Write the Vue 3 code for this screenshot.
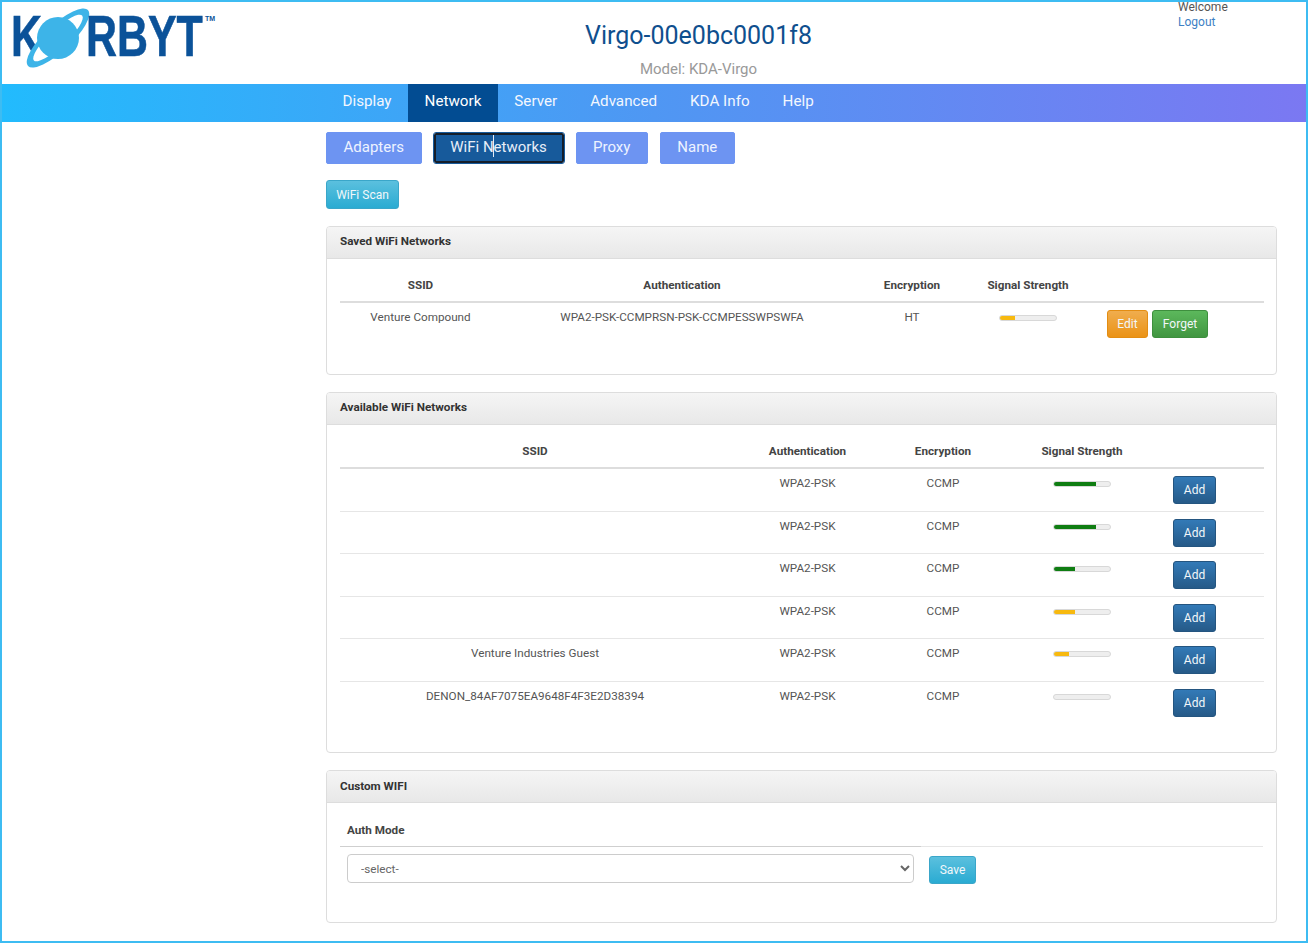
<template>
  <div class="frame">
    <header class="top">
      <div class="logo">
        <span class="logo-k">K</span>
        <svg class="planet" width="68" height="64" viewBox="0 0 68 64">
          <g transform="rotate(-43 34 32)">
            <ellipse cx="34" cy="32" rx="41" ry="13" fill="#3db4e8" />
            <ellipse cx="34" cy="32" rx="33" ry="8.5" fill="#fff" />
          </g>
          <circle cx="34" cy="32" r="21" fill="#3db4e8" />
        </svg>
        <span class="logo-rest">RBYT</span>
        <span class="logo-tm">TM</span>
      </div>
      <div class="title">
        <h1>{{ device }}</h1>
        <p>Model: KDA-Virgo</p>
      </div>
      <div class="user">
        <div>Welcome</div>
        <a href="#">Logout</a>
      </div>
    </header>

    <nav class="nav">
      <a v-for="item in navItems" :key="item" href="#" class="nav-item" :class="{ active: item === 'Network' }">{{ item }}</a>
    </nav>

    <main class="content">
      <div class="tabs">
        <button v-for="tab in tabs" :key="tab" class="tab" :class="{ active: tab === 'WiFi Networks' }">{{ tab }}<span v-if="tab === 'WiFi Networks'" class="cursor"></span></button>
      </div>

      <button class="btn info scan">WiFi Scan</button>

      <section class="panel saved">
        <div class="panel-head">Saved WiFi Networks</div>
        <div class="panel-body">
          <table>
            <colgroup>
              <col style="width: 161px" /><col style="width: 362px" /><col style="width: 98px" /><col style="width: 134px" /><col />
            </colgroup>
            <thead>
              <tr><th>SSID</th><th>Authentication</th><th>Encryption</th><th>Signal Strength</th><th></th></tr>
            </thead>
            <tbody>
              <tr>
                <td>Venture Compound</td>
                <td>WPA2-PSK-CCMPRSN-PSK-CCMPESSWPSWFA</td>
                <td>HT</td>
                <td><div class="bar"><div class="fill yellow" style="width: 27%"></div></div></td>
                <td class="actions">
                  <button class="btn warning">Edit</button>
                  <button class="btn success">Forget</button>
                </td>
              </tr>
            </tbody>
          </table>
        </div>
      </section>

      <section class="panel available">
        <div class="panel-head">Available WiFi Networks</div>
        <div class="panel-body">
          <table>
            <colgroup>
              <col style="width: 390px" /><col style="width: 155px" /><col style="width: 116px" /><col style="width: 162px" /><col />
            </colgroup>
            <thead>
              <tr><th>SSID</th><th>Authentication</th><th>Encryption</th><th>Signal Strength</th><th></th></tr>
            </thead>
            <tbody>
              <tr v-for="(net, i) in networks" :key="i">
                <td>{{ net.ssid }}</td>
                <td>WPA2-PSK</td>
                <td>CCMP</td>
                <td>
                  <div class="bar">
                    <div class="fill" :class="net.color" :style="{ width: net.level + '%' }"></div>
                  </div>
                </td>
                <td class="actions"><button class="btn primary">Add</button></td>
              </tr>
            </tbody>
          </table>
        </div>
      </section>

      <section class="panel custom">
        <div class="panel-head">Custom WIFI</div>
        <div class="panel-body">
          <div class="auth-head"><span>Auth Mode</span></div>
          <div class="auth-row">
            <select class="select">
              <option>-select-</option>
            </select>
            <button class="btn info save">Save</button>
          </div>
        </div>
      </section>
    </main>
  </div>
</template>

<script setup>
const device = 'Virgo-00e0bc0001f8'
const navItems = ['Display', 'Network', 'Server', 'Advanced', 'KDA Info', 'Help']
const tabs = ['Adapters', 'WiFi Networks', 'Proxy', 'Name']
const networks = [
  { ssid: '', level: 75, color: 'green' },
  { ssid: '', level: 75, color: 'green' },
  { ssid: '', level: 38, color: 'green' },
  { ssid: '', level: 38, color: 'yellow' },
  { ssid: 'Venture Industries Guest', level: 26, color: 'yellow' },
  { ssid: 'DENON_84AF7075EA9648F4F3E2D38394', level: 0, color: 'yellow' }
]
</script>

<style>
html, body {
  margin: 0;
  background: #fff;
}
</style>

<style scoped>
.frame {
  box-sizing: border-box;
  width: 1308px;
  height: 943px;
  overflow: hidden;
  border: 2px solid #3dbcf2;
  font-family: Roboto, "Liberation Sans", sans-serif;
  font-size: 12px;
  color: #555;
  background: #fff;
}

.top {
  position: relative;
  height: 82px;
  display: flex;
  justify-content: center;
}

.logo {
  position: absolute;
  left: 11px;
  top: 0;
  width: 210px;
  height: 70px;
  color: #0b5299;
  font-weight: 700;
  font-family: "Liberation Sans", Arial, sans-serif;
}

.logo-k,
.logo-rest {
  position: absolute;
  top: 1px;
  font-size: 58px;
  line-height: 66px;
  transform: scaleX(0.74);
  transform-origin: left center;
  -webkit-text-stroke: 0.6px #0b5299;
}

.logo-k {
  left: -2px;
}

.logo-rest {
  left: 73px;
}

.planet {
  position: absolute;
  left: 11px;
  top: 4px;
  overflow: visible;
}

.logo-tm {
  position: absolute;
  left: 192px;
  top: 13px;
  font-size: 7px;
  line-height: 8px;
}

.title {
  text-align: center;
  margin-left: 89px;
}

.title h1 {
  margin: 18px 0 0;
  font-size: 25px;
  font-weight: 400;
  line-height: 31px;
  color: #0f4f8e;
}

.title p {
  margin: 9px 0 0;
  font-size: 15px;
  line-height: 18px;
  color: #999;
}

.user {
  position: absolute;
  left: 1176px;
  top: -2px;
  font-size: 12px;
  line-height: 15px;
}

.user a {
  color: #3d7fc4;
  text-decoration: none;
}

.nav {
  height: 38px;
  display: flex;
  padding-left: 324px;
  background: linear-gradient(90deg, #22bbfd 0%, #4f97f3 50%, #7b78f2 100%);
}

.nav-item {
  padding: 0 16.5px;
  line-height: 35px;
  font-size: 15.2px;
  color: #f3f7fe;
  text-decoration: none;
}

.nav-item.active {
  background: #024c92;
  color: #fff;
}

.content {
  padding: 10px 29px 0 324px;
}

.tabs {
  display: flex;
  align-items: flex-start;
  gap: 11px;
}

.tab {
  position: relative;
  box-sizing: border-box;
  height: 32px;
  padding: 0 16.5px 3px;
  border: 1px solid #6d94f2;
  border-radius: 2px;
  background: #6d94f2;
  font-family: inherit;
  font-size: 15px;
  color: #eef3ff;
}

.tab:last-child {
  margin-left: 1px;
}

.tab.active {
  width: 130px;
  height: 30px;
  margin: 1px;
  background: #175a9b;
  color: #e8eef8;
  border: 2px solid #151e2a;
  outline: 1px solid #175a9b;
  padding: 0 0 2px;
}

.cursor {
  position: absolute;
  left: 57px;
  top: 0;
  height: 22px;
  border-left: 1px solid #e6edf8;
}

.btn {
  box-sizing: border-box;
  border-radius: 3px;
  font-family: inherit;
  font-size: 12px;
  padding: 0;
  color: #f2f7fa;
  border: 1px solid transparent;
}

.info {
  background: linear-gradient(#5bc0de, #2aabd2);
  border-color: #3aa6c9;
}

.warning {
  background: linear-gradient(#f0ad4e, #eb9316);
  border-color: #e38d13;
}

.success {
  background: linear-gradient(#5cb85c, #419641);
  border-color: #3e8f3e;
}

.primary {
  background: linear-gradient(#337ab7, #265a88);
  border-color: #245580;
}

.scan {
  display: block;
  width: 73px;
  height: 29px;
  margin-top: 16px;
}

.panel {
  border: 1px solid #ddd;
  border-radius: 4px;
  box-sizing: border-box;
  overflow: hidden;
}

.saved {
  height: 149px;
  margin-top: 17px;
}

.available {
  height: 361px;
  margin-top: 17px;
}

.custom {
  height: 153px;
  margin-top: 17px;
}

.panel-head {
  box-sizing: border-box;
  height: 32px;
  padding-left: 13px;
  line-height: 28px;
  font-size: 11.7px;
  font-weight: 700;
  color: #333;
  background: linear-gradient(#f5f5f5, #e8e8e8);
  border-bottom: 1px solid #ddd;
}

.custom .panel-head {
  line-height: 30px;
}

.panel-body {
  padding: 11px 13px 0 13px;
}

table {
  width: 924px;
  border-collapse: collapse;
  table-layout: fixed;
  font-size: 11.7px;
}

th {
  height: 29px;
  padding: 0 0 2px;
  font-size: 11.7px;
  font-weight: 700;
  color: #444;
  text-align: center;
  vertical-align: middle;
  border-bottom: 2px solid #ddd;
}

td {
  height: 43px;
  box-sizing: border-box;
  padding: 6px 0 0;
  text-align: center;
  vertical-align: top;
  line-height: 16px;
  border-bottom: 1px solid #e6e6e6;
}

tbody tr:nth-child(even) td {
  height: 42px;
}

.saved td,
tbody tr:last-child td {
  border-bottom: 0;
}

.bar {
  box-sizing: border-box;
  width: 58px;
  height: 6px;
  margin: 6px auto 0;
  overflow: hidden;
  border-radius: 3px;
  border: 1px solid #d8d8d8;
  background: #eee;
}

.fill {
  height: 100%;
}

.green {
  background: #0f7d12;
}

.yellow {
  background: #f7b90f;
}

td.actions {
  text-align: left;
  padding-left: 10px;
  padding-top: 7px;
  font-size: 0;
}

.saved td.actions {
  padding-left: 12px;
}

.actions .btn {
  height: 28px;
}

.actions .primary {
  width: 43px;
}

.actions .warning {
  width: 41px;
}

.actions .success {
  width: 56px;
  margin-left: 4px;
}

.auth-head {
  height: 32px;
  border-bottom: 1px solid #e6e6e6;
  position: relative;
  font-size: 11.7px;
  font-weight: 700;
  color: #444;
  line-height: 32px;
  padding-left: 7px;
}

.auth-head::after {
  content: "";
  position: absolute;
  left: 0;
  bottom: -1px;
  width: 581px;
  border-bottom: 1px solid #cfcfcf;
}

.auth-row {
  display: flex;
  align-items: flex-start;
  padding: 7px 0 0 7px;
}

.select {
  box-sizing: border-box;
  width: 567px;
  height: 29px;
  padding-left: 9px;
  border: 1px solid #ccc;
  border-radius: 4px;
  background: #fff;
  font-family: inherit;
  font-size: 11.7px;
  color: #666;
}

.save {
  width: 47px;
  height: 28px;
  margin: 2px 0 0 15px;
}
</style>
